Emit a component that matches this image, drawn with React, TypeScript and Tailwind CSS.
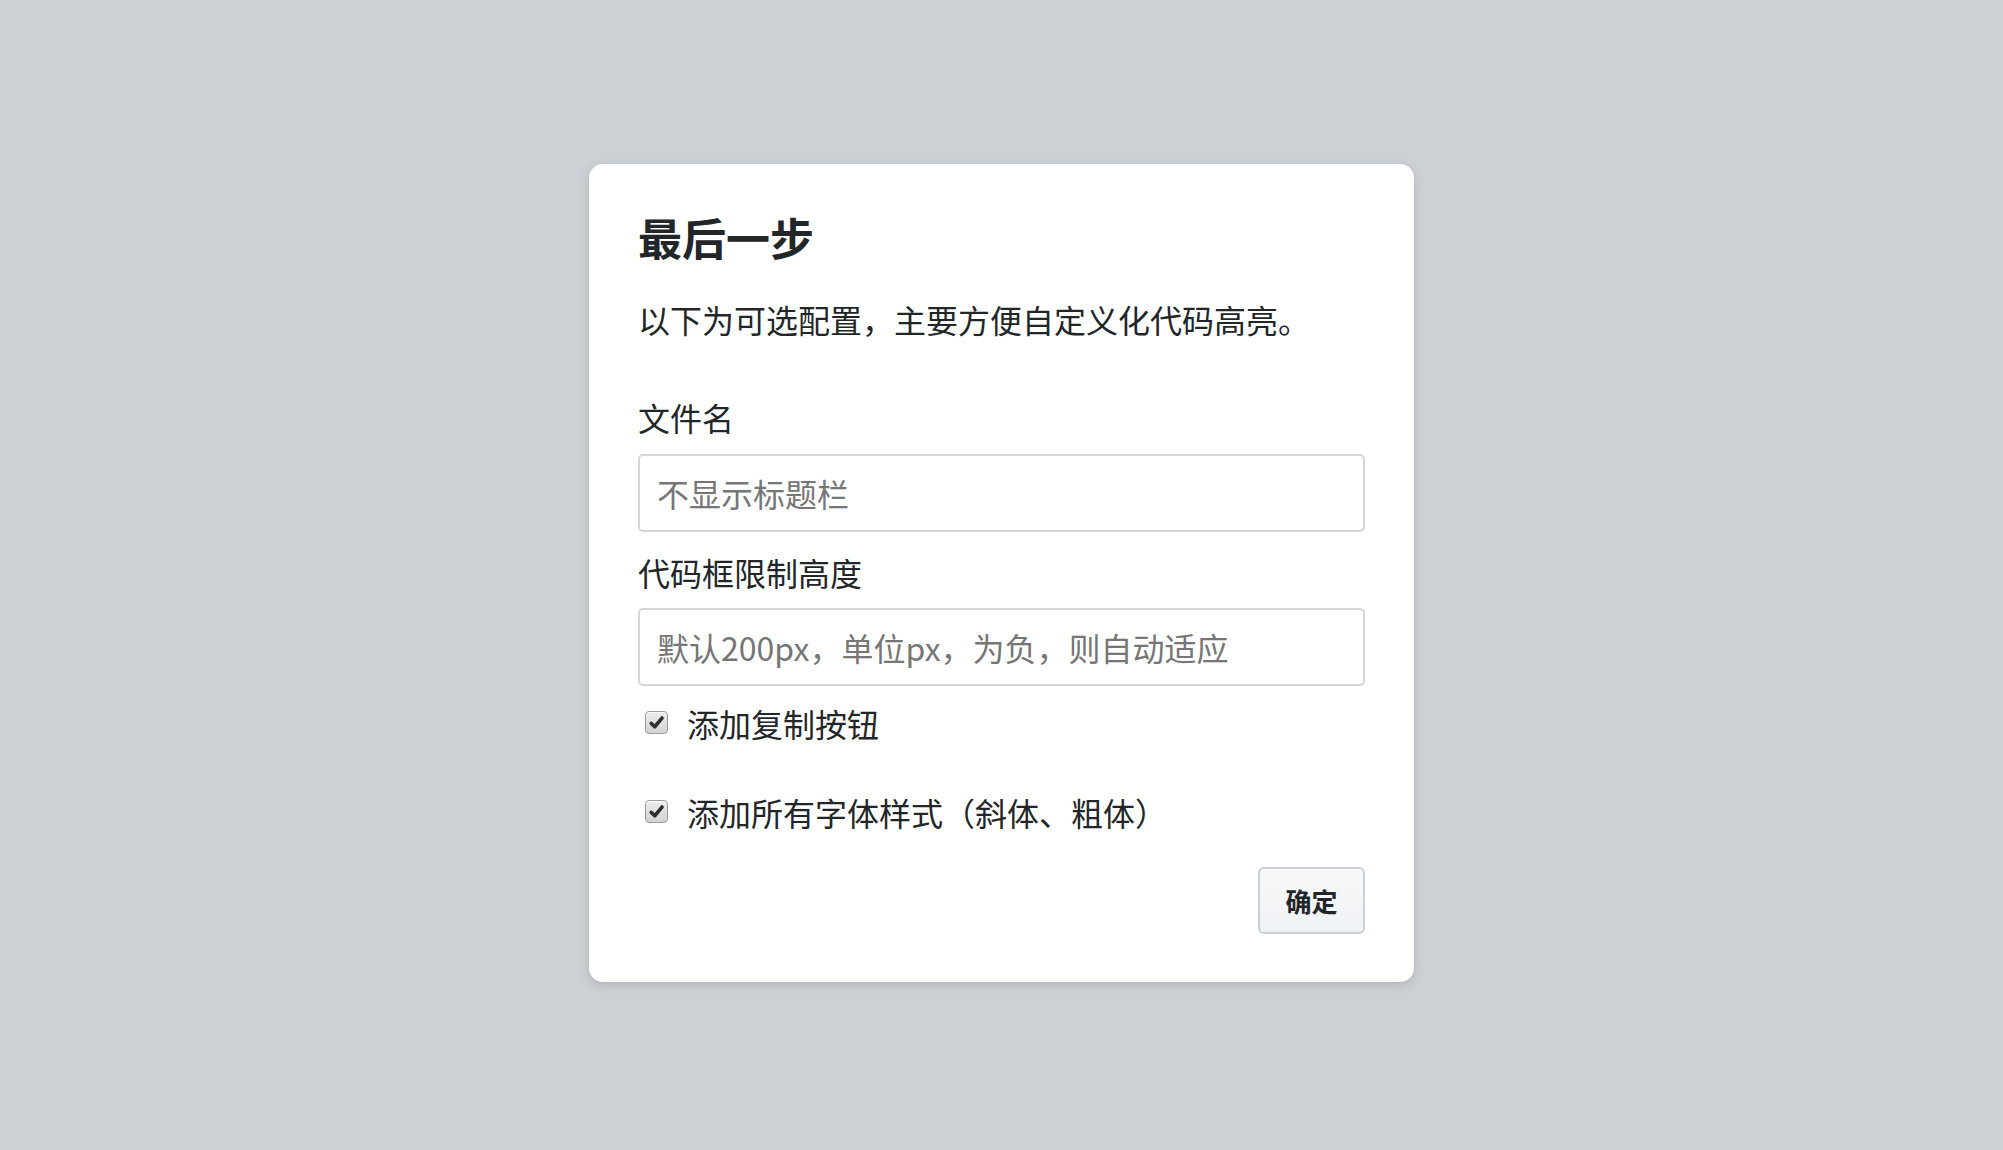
import { useState } from 'react'

const sans = { fontFamily: '"Noto Sans CJK SC", "Noto Sans", sans-serif' }

function Check({ label, defaultOn = true }: { label: string; defaultOn?: boolean }) {
  const [on, setOn] = useState(defaultOn)
  return (
    <label className="flex h-[46px] cursor-pointer items-center pl-[7px]" onClick={() => setOn(!on)}>
      <span className="flex h-[23px] w-[23px] items-center justify-center rounded-[4px] border border-[#9c9c9c] bg-gradient-to-b from-[#eeeeee] to-[#d2d2d2] shadow-[inset_0_1px_0_#fff]">
        {on && (
          <svg viewBox="0 0 16 16" className="h-[17px] w-[17px]">
            <path d="M3 8.8 L6.4 12 L13.2 3.8" fill="none" stroke="#2e2e2e" strokeWidth="3.4" strokeLinecap="round" strokeLinejoin="round" />
          </svg>
        )}
      </span>
      <span className="ml-[19px] text-[32px] leading-[46px] text-[#222629]">{label}</span>
    </label>
  )
}

export default function App() {
  return (
    <div className="flex min-h-screen w-full items-center justify-center bg-[#cdd1d5] pb-[5px]" style={sans}>
      <div className="flex w-[825px] flex-col rounded-[14px] bg-white px-[49px] pt-[49px] pb-[48px] shadow-[0_3px_10px_rgba(80,90,100,0.25)]">
        <h2 className="text-[44px] font-bold leading-[48px] text-[#222629]">最后一步</h2>
        <p className="mt-[35px] text-[32px] leading-[46px] text-[#222629]">
          以下为可选配置，主要方便自定义化代码高亮。
        </p>

        <div className="mt-[52px] text-[32px] leading-[46px] text-[#222629]">文件名</div>
        <input
          type="text"
          placeholder="不显示标题栏"
          className="mt-[14px] h-[78px] w-full rounded-[5px] border-2 border-[#d6d6d6] px-[17px] text-[32px] text-[#222629] outline-none placeholder:text-[#767676]"
        />

        <div className="mt-[17px] text-[32px] leading-[46px] text-[#222629]">代码框限制高度</div>
        <input
          type="text"
          placeholder="默认200px，单位px，为负，则自动适应"
          className="mt-[13px] h-[78px] w-full rounded-[5px] border-2 border-[#d6d6d6] px-[17px] text-[32px] text-[#222629] outline-none placeholder:text-[#767676]"
        />

        <div className="mt-[14px] flex flex-col gap-[43px]">
          <Check label="添加复制按钮" />
          <Check label="添加所有字体样式（斜体、粗体）" />
        </div>

        <div className="mt-[32px] flex justify-end">
          <button className="h-[67px] w-[107px] rounded-[6px] border-2 border-[#cbced2] bg-gradient-to-b from-[#f7f8fa] to-[#eff2f5] text-[26px] font-bold text-[#222629]">
            确定
          </button>
        </div>
      </div>
    </div>
  )
}
